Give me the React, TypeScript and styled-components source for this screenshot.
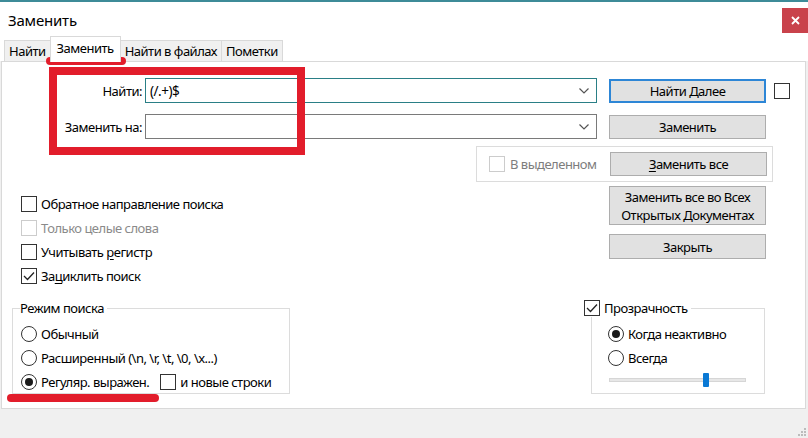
import React from "react";
import styled, { createGlobalStyle, css } from "styled-components";

const Global = createGlobalStyle`
  html, body { margin: 0; padding: 0; }
  body { font-family: "Noto Sans", "Open Sans", sans-serif; font-size: 13px; letter-spacing: -0.5px; color: #000; }
  * { box-sizing: border-box; }
`;

const RED = "#e21d2b";

const Window = styled.div`
  position: relative;
  width: 808px;
  height: 438px;
  background: #f0f0f0;
  border-top: 2px solid #3d8b98;
  overflow: hidden;
  display: flex;
  flex-direction: column;
`;

const TitleBar = styled.div`
  height: 33px;
  display: flex;
  align-items: flex-start;
  background: #fff;
`;

const Title = styled.div`
  font-size: 15px;
  letter-spacing: -0.2px;
  padding: 8px 0 0 8px;
`;

const CloseBtn = styled.div`
  margin-left: auto;
  margin-top: 6px;
  width: 26px;
  height: 25px;
  background: #c9424b;
  color: #fff;
  display: flex;
  align-items: center;
  justify-content: center;
`;

const TabStrip = styled.div`
  height: 26px;
  display: flex;
  align-items: flex-end;
  padding-left: 4px;
  background: #fff;
`;

const Tab = styled.div<{ $active?: boolean }>`
  height: 21px;
  padding: 0 4px;
  display: flex;
  align-items: center;
  background: #f0f0f0;
  border: 1px solid #d9d9d9;
  border-bottom: none;
  margin-right: -1px;
  ${(p) =>
    p.$active &&
    css`
      height: 26px;
      background: #fff;
      padding: 0 6px 4px 6px;
      position: relative;
      z-index: 1;
      margin-bottom: -1px;
    `}
`;

const Panel = styled.div`
  margin: 0 2px 0 1px;
  height: 348px;
  background: #fff;
  border: 1px solid #d9d9d9;
  padding-top: 16px;
  display: flex;
  flex-direction: column;
`;

const FieldRow = styled.div<{ $mt?: number }>`
  display: flex;
  align-items: center;
  height: 25px;
  margin-top: ${(p) => p.$mt ?? 0}px;
`;

const FieldLabel = styled.div`
  width: 142px;
  text-align: right;
  padding-right: 2px;
`;

const Combo = styled.div<{ $focused?: boolean }>`
  width: 452px;
  height: 25px;
  margin-left: 1px;
  border: 1px solid ${(p) => (p.$focused ? "#2a7f86" : "#7a7a7a")};
  display: flex;
  align-items: center;
  padding-left: 4px;
  font-size: 13.5px;
`;

const ComboText = styled.span`
  flex: 1;
`;

const Chevron = styled.svg`
  width: 10px;
  height: 6px;
  margin-right: 7px;
`;

const Button = styled.div<{ $focused?: boolean; $h?: number }>`
  width: 157px;
  height: ${(p) => p.$h ?? 24}px;
  flex: none;
  background: #e1e1e1;
  border: ${(p) => (p.$focused ? "2px solid #2d86d6" : "1px solid #adadad")};
  display: flex;
  align-items: center;
  justify-content: center;
  text-align: center;
  line-height: 18px;
`;

const RightButton = styled(Button)`
  margin-left: 12px;
`;

const GroupButton = styled(Button)`
  margin-left: auto;
`;

const Box = styled.div<{ $disabled?: boolean }>`
  width: 16px;
  height: 16px;
  flex: none;
  border: 1px solid ${(p) => (p.$disabled ? "#cccccc" : "#333")};
  background: #fff;
  display: flex;
  align-items: center;
  justify-content: center;
`;

const SideBox = styled(Box)`
  margin-left: 8px;
`;

const SelectionGroup = styled.div`
  margin-top: 7px;
  margin-left: 474px;
  width: 297px;
  height: 36px;
  border: 1px solid #dcdcdc;
  display: flex;
  align-items: center;
  padding: 0 5px 0 12px;
`;

const GreyLabel = styled.span`
  color: #7d7d7d;
  margin-left: 5px;
`;

const Lower = styled.div`
  display: flex;
  flex: 1;
`;

const LeftCol = styled.div`
  width: 582px;
  padding-top: 10px;
  display: flex;
  flex-direction: column;
`;

const OptionRow = styled.div<{ $disabled?: boolean; $indent?: number }>`
  height: 24px;
  display: flex;
  align-items: center;
  padding-left: ${(p) => p.$indent ?? 19}px;
  color: ${(p) => (p.$disabled ? "#8a8a8a" : "#000")};
`;

const OptionText = styled.span`
  margin-left: 4px;
`;

const Group = styled.div<{ $w: number; $ml: number; $mt: number }>`
  position: relative;
  width: ${(p) => p.$w}px;
  height: 86px;
  margin-left: ${(p) => p.$ml}px;
  margin-top: ${(p) => p.$mt}px;
  border: 1px solid #dcdcdc;
  padding-top: 13px;
`;

const Legend = styled.div<{ $left: number }>`
  position: absolute;
  top: -10px;
  left: ${(p) => p.$left}px;
  background: #fff;
  display: flex;
  align-items: center;
  height: 18px;
  padding-right: 3px;
`;

const Radio = styled.div<{ $checked?: boolean }>`
  width: 16px;
  height: 16px;
  flex: none;
  border-radius: 50%;
  border: 1px solid #333;
  background: #fff;
  display: flex;
  align-items: center;
  justify-content: center;
  &::after {
    content: "";
    width: 8px;
    height: 8px;
    border-radius: 50%;
    background: ${(p) => (p.$checked ? "#1a1a1a" : "transparent")};
  }
`;

const InlineBox = styled(Box)`
  margin-left: 11px;
`;

const RightCol = styled.div`
  display: flex;
  flex-direction: column;
  padding-top: 4px;
`;

const Stack = styled.div`
  display: flex;
  flex-direction: column;
  gap: 9px;
  padding-left: 25px;
`;

const Slider = styled.div`
  position: relative;
  margin: 8px 0 0 17px;
  width: 137px;
  height: 4px;
  background: #e7e7e7;
  border: 1px solid #d6d6d6;
`;

const Thumb = styled.div`
  position: absolute;
  top: -6px;
  width: 6px;
  height: 14px;
  background: #0a78d4;
  border-radius: 1px;
`;

const Footer = styled.div`
  flex: 1;
  position: relative;
`;

const Grip = styled.svg`
  position: absolute;
  right: 2px;
  bottom: 2px;
`;

const Annotation = styled.div<{ $l: number; $t: number; $w: number; $h: number }>`
  position: absolute;
  left: ${(p) => p.$l}px;
  top: ${(p) => p.$t}px;
  width: ${(p) => p.$w}px;
  height: ${(p) => p.$h}px;
  pointer-events: none;
`;

const RedFrame = styled(Annotation)`
  border: 8px solid ${RED};
`;

const RedLine = styled(Annotation)`
  background: ${RED};
  border-radius: 4px;
`;

const U = styled.span`
  text-decoration: underline;
  text-underline-offset: 2px;
`;

const Check = () => (
  <svg width="12" height="10" viewBox="0 0 12 10">
    <polyline points="1,5 4.5,8.5 11,1.5" fill="none" stroke="#222" strokeWidth="1.3" />
  </svg>
);

const ComboArrow = () => (
  <Chevron viewBox="0 0 10 6">
    <polyline points="0.5,0.5 5,5 9.5,0.5" fill="none" stroke="#555" strokeWidth="1.2" />
  </Chevron>
);

export default function App() {
  return (
    <>
      <Global />
      <Window>
        <TitleBar>
          <Title>Заменить</Title>
          <CloseBtn>
            <svg width="9" height="9" viewBox="0 0 9 9">
              <path d="M1 1 L8 8 M8 1 L1 8" stroke="#fff" strokeWidth="1.8" />
            </svg>
          </CloseBtn>
        </TitleBar>
        <TabStrip>
          <Tab>Найти</Tab>
          <Tab $active>Заменить</Tab>
          <Tab>Найти в файлах</Tab>
          <Tab>Пометки</Tab>
        </TabStrip>
        <Panel>
          <FieldRow>
            <FieldLabel>Найти:</FieldLabel>
            <Combo $focused>
              <ComboText>(/.+)$</ComboText>
              <ComboArrow />
            </Combo>
            <RightButton $focused>Найти Далее</RightButton>
            <SideBox />
          </FieldRow>
          <FieldRow $mt={11}>
            <FieldLabel>Заменить на:</FieldLabel>
            <Combo>
              <ComboText />
              <ComboArrow />
            </Combo>
            <RightButton>Заменить</RightButton>
          </FieldRow>
          <SelectionGroup>
            <Box $disabled />
            <GreyLabel>В выделенном</GreyLabel>
            <GroupButton>
              <span>
                <U>З</U>аменить все
              </span>
            </GroupButton>
          </SelectionGroup>
          <Lower>
            <LeftCol>
              <OptionRow>
                <Box />
                <OptionText>Обратное направление поиска</OptionText>
              </OptionRow>
              <OptionRow $disabled>
                <Box $disabled />
                <OptionText>Только целые слова</OptionText>
              </OptionRow>
              <OptionRow>
                <Box />
                <OptionText>
                  Учитывать <U>р</U>егистр
                </OptionText>
              </OptionRow>
              <OptionRow>
                <Box>
                  <Check />
                </Box>
                <OptionText>
                  За<U>ц</U>иклить поиск
                </OptionText>
              </OptionRow>
              <Group $w={278} $ml={10} $mt={20}>
                <Legend $left={7}>Режим поиска</Legend>
                <OptionRow $indent={8}>
                  <Radio />
                  <OptionText>Обычный</OptionText>
                </OptionRow>
                <OptionRow $indent={8}>
                  <Radio />
                  <OptionText>Расширенный (\n, \r, \t, \0, \x...)</OptionText>
                </OptionRow>
                <OptionRow $indent={8}>
                  <Radio $checked />
                  <OptionText>Регуляр. выражен.</OptionText>
                  <InlineBox />
                  <OptionText>и новые строки</OptionText>
                </OptionRow>
              </Group>
            </LeftCol>
            <RightCol>
              <Stack>
                <Button $h={39}>
                  <span>
                    Заменить все во Всех
                    <br />
                    Открытых <U>Д</U>окументах
                  </span>
                </Button>
                <Button $h={25}>Закрыть</Button>
              </Stack>
              <Group $w={174} $ml={7} $mt={49}>
                <Legend $left={-8}>
                  <Box>
                    <Check />
                  </Box>
                  <OptionText>Прозрачность</OptionText>
                </Legend>
                <OptionRow $indent={16}>
                  <Radio $checked />
                  <OptionText>Когда неактивно</OptionText>
                </OptionRow>
                <OptionRow $indent={16}>
                  <Radio />
                  <OptionText>Всегда</OptionText>
                </OptionRow>
                <Slider>
                  <Thumb style={{ left: 93 }} />
                </Slider>
              </Group>
            </RightCol>
          </Lower>
        </Panel>
        <Footer>
          <Grip width="10" height="10" viewBox="0 0 10 10">
            {[
              [8, 0],
              [8, 3],
              [5, 3],
              [8, 6],
              [5, 6],
              [2, 6],
            ].map(([x, y], i) => (
              <rect key={i} x={x} y={y + 2} width="2" height="2" fill="#bcbcbc" />
            ))}
          </Grip>
        </Footer>
        <RedFrame $l={49} $t={65} $w={256} $h={88} />
        <RedLine $l={46} $t={55} $w={80} $h={8} />
        <RedLine $l={7} $t={392} $w={152} $h={8} />
      </Window>
    </>
  );
}
